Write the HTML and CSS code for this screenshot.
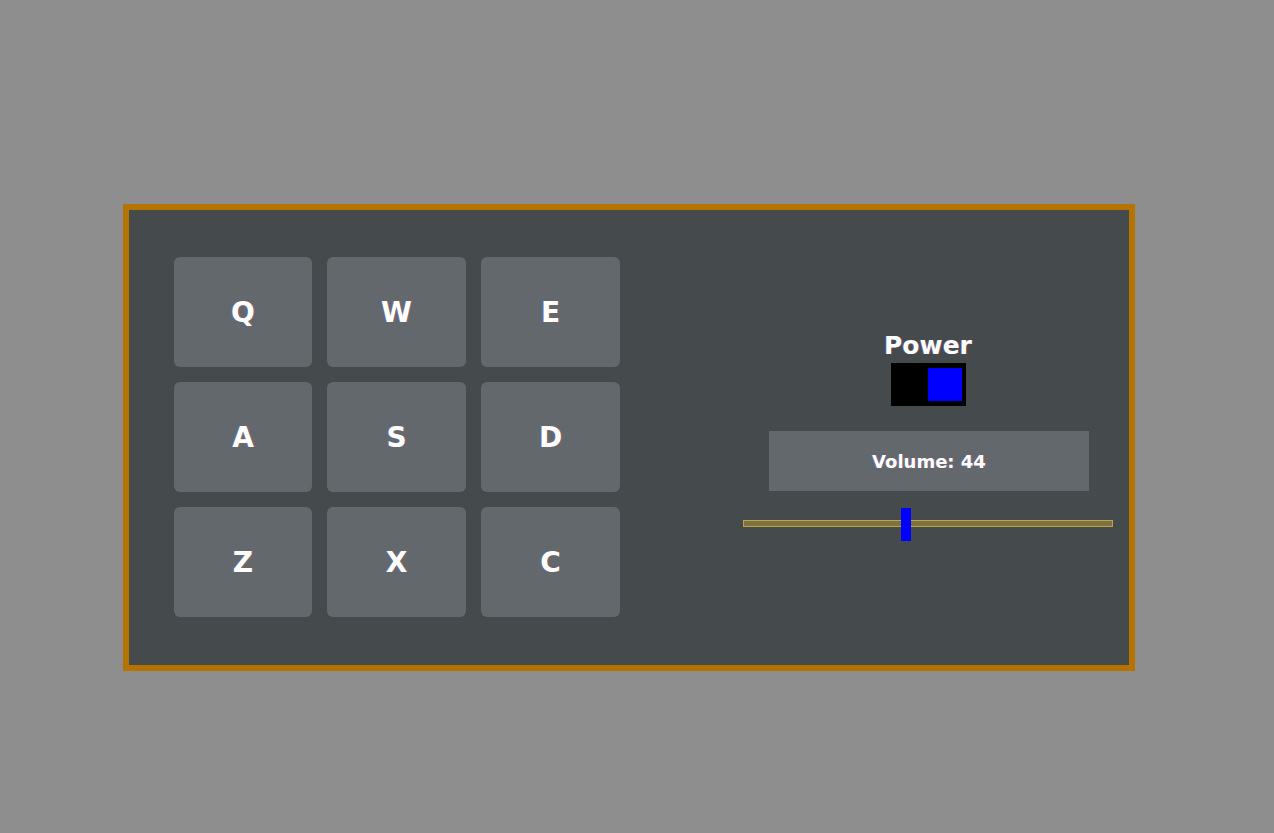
FILE: index.html
```html
<!DOCTYPE html>
<html>
<head>
<meta charset="utf-8">
<link rel="stylesheet" href="styles.css">
</head>
<body>
<div class="page">
  <div class="machine">
    <div class="pads">
      <div class="pad">Q</div>
      <div class="pad">W</div>
      <div class="pad">E</div>
      <div class="pad">A</div>
      <div class="pad">S</div>
      <div class="pad">D</div>
      <div class="pad">Z</div>
      <div class="pad">X</div>
      <div class="pad">C</div>
    </div>
    <div class="controls">
      <div class="power-label">Power</div>
      <div class="toggle"><div class="toggle-knob"></div></div>
      <div class="display">Volume: 44</div>
      <div class="slider">
        <div class="track"></div>
        <div class="thumb" style="left: 158px"></div>
      </div>
    </div>
  </div>
</div>
</body>
</html>
```

FILE: styles.css
```css
html, body {
  margin: 0;
  padding: 0;
  background: #8e8e8e;
  font-family: "DejaVu Sans", "Liberation Sans", sans-serif;
  font-weight: bold;
  color: #ffffff;
}

.page {
  padding: 204px 0 0 123px;
}

.machine {
  box-sizing: border-box;
  width: 1012px;
  height: 467px;
  border: 6px solid #b57400;
  background: #454a4d;
  display: flex;
  align-items: flex-start;
  padding-left: 45px;
  padding-top: 47px;
}

.pads {
  display: grid;
  grid-template-columns: 138px 139px 139px;
  grid-auto-rows: 110px;
  column-gap: 15px;
  row-gap: 15px;
}

.pad {
  background: #62686b;
  border-radius: 6px;
  display: flex;
  align-items: center;
  justify-content: center;
  font-size: 28px;
  text-shadow: 1px 0 0 rgba(255, 80, 80, 0.25), -1px 0 0 rgba(80, 120, 255, 0.35);
}

.controls {
  margin-left: 123px;
  width: 370px;
  display: flex;
  flex-direction: column;
  align-items: center;
  margin-top: 75px;
}

.power-label {
  font-size: 25px;
  line-height: 28px;
  text-shadow: 1px 0 0 rgba(255, 80, 80, 0.25), -1px 0 0 rgba(80, 120, 255, 0.35);
}

.toggle {
  margin-top: 3px;
  width: 75px;
  height: 43px;
  box-sizing: border-box;
  background: #000000;
  display: flex;
  justify-content: flex-end;
  align-items: center;
  padding-right: 4px;
}

.toggle-knob {
  width: 34px;
  height: 33px;
  background: #0000ff;
}

.display {
  margin-top: 25px;
  margin-left: 2px;
  width: 320px;
  height: 60px;
  background: #62686b;
  display: flex;
  align-items: center;
  justify-content: center;
  font-size: 18px;
  text-shadow: 1px 0 0 rgba(255, 80, 80, 0.25), -1px 0 0 rgba(80, 120, 255, 0.35);
}

.slider {
  position: relative;
  margin-top: 17px;
  width: 370px;
  height: 33px;
  display: flex;
  align-items: center;
}

.track {
  box-sizing: border-box;
  width: 370px;
  height: 7px;
  margin-top: -2px;
  background: #7e7146;
  border: 1px solid #c0a53c;
}

.thumb {
  position: absolute;
  top: 0;
  width: 10px;
  height: 33px;
  background: #0000ff;
}
```
